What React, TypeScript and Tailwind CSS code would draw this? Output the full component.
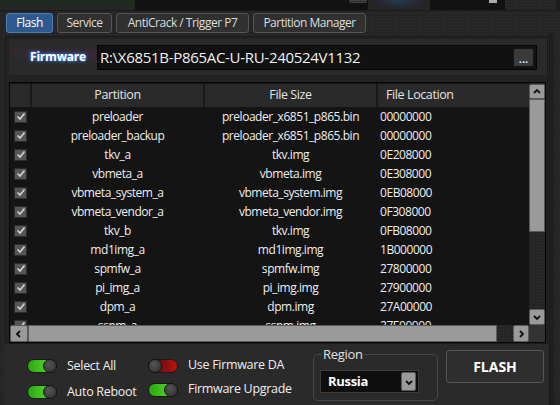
import React from 'react';

const rows: [string, string, string][] = [
    ['preloader', 'preloader_x6851_p865.bin', '00000000'],
    ['preloader_backup', 'preloader_x6851_p865.bin', '00000000'],
    ['tkv_a', 'tkv.img', '0E208000'],
    ['vbmeta_a', 'vbmeta.img', '0E308000'],
    ['vbmeta_system_a', 'vbmeta_system.img', '0EB08000'],
    ['vbmeta_vendor_a', 'vbmeta_vendor.img', '0F308000'],
    ['tkv_b', 'tkv.img', '0FB08000'],
    ['md1img_a', 'md1img.img', '1B000000'],
    ['spmfw_a', 'spmfw.img', '27800000'],
    ['pi_img_a', 'pi_img.img', '27900000'],
    ['dpm_a', 'dpm.img', '27A00000'],
    ['sspm_a', 'sspm.img', '27E00000'],
];

const texture = 'bg-[#252525] bg-[image:radial-gradient(#303030_1px,transparent_1px)] bg-[size:3px_3px]';

const Chevron = ({ dir }: { dir: 'up' | 'down' | 'left' | 'right' }) => {
    const pts = {
        up: '2,6 5,3 8,6',
        down: '2,4 5,7 8,4',
        left: '6,2 3,5 6,8',
        right: '4,2 7,5 4,8',
    }[dir];
    return (
        <svg width="10" height="10" viewBox="0 0 10 10">
            <polyline points={pts} fill="none" stroke="#111" strokeWidth="1.8" />
        </svg>
    );
};

const ScrollBtn = ({ dir, className = '' }: { dir: 'up' | 'down' | 'left' | 'right'; className?: string }) => (
    <div className={`flex shrink-0 items-center justify-center rounded-[2px] border border-[#5a5a5a] bg-[#9a9a9a] ${className}`}>
        <Chevron dir={dir} />
    </div>
);

const Check = () => (
    <div className="flex h-[12px] w-[13px] items-center justify-center border border-[#2c2c2c] bg-[#555]">
        <svg width="10" height="9" viewBox="0 0 10 9">
            <polyline points="1.5,4.5 4,7 8.5,1.5" fill="none" stroke="#d4d4d4" strokeWidth="1.6" />
        </svg>
    </div>
);

const Toggle = ({ on, red = false }: { on: boolean; red?: boolean }) => (
    <div
        className={`relative h-[14px] w-[30px] shrink-0 rounded-full border border-[#1a1a1a] ${
            on
                ? 'bg-[linear-gradient(90deg,#2aa60e,#5fe83a)]'
                : red
                ? 'bg-[linear-gradient(90deg,#3a1010,#c01010)]'
                : 'bg-[#333]'
        }`}
    >
        <div
            className={`absolute top-[-1px] h-[14px] w-[14px] rounded-full border border-[#151515] bg-[radial-gradient(circle_at_40%_35%,#555,#2e2e2e)] ${
                on ? 'right-[-1px]' : 'left-[-1px]'
            }`}
        />
    </div>
);

export default function App() {
    return (
        <div
            className={`flex h-[405px] w-[560px] flex-col overflow-hidden ${texture} text-[#eeeeee]`}
            style={{ fontFamily: '"Open Sans", "Noto Sans", sans-serif' }}
        >
            {/* strip of the window above */}
            <div className="flex h-[11px] shrink-0 border-b border-[#1a1a1a]">
                <div className="w-[135px] bg-[linear-gradient(180deg,#1e2a1e,#262626)]" />
                <div className="relative w-[233px] bg-[#121212]">
                    <div className="absolute right-[1px] top-0 h-[3px] w-[18px] rounded-b-[2px] border border-[#444] bg-[#2a2a2a]" />
                </div>
                <div className="w-[62px] bg-[radial-gradient(ellipse_at_50%_0%,#233a5a,#252525_60%)]" />
                <div className="relative w-[75px] bg-[#121212]">
                    <div className="absolute right-[8px] top-0 h-[3px] w-[8px] bg-[#aaa]" />
                </div>
                <div className="flex-1 border-r-[4px] border-[#1c1c1c]" />
            </div>

            {/* tabs */}
            <div className="ml-[6px] mt-[2px] flex h-[20px] shrink-0 gap-[4px] whitespace-nowrap text-[12px] tracking-[-0.5px]">
                <div className="flex w-[47px] items-center justify-center rounded-[3px] border border-[#4f7fb8] bg-[#2d5a8e] text-white">Flash</div>
                <div className="flex w-[55px] items-center justify-center rounded-[3px] border border-[#555] bg-[#303030] text-[#ddd]">Service</div>
                <div className="flex w-[133px] items-center justify-center rounded-[3px] border border-[#555] bg-[#303030] text-[#ddd]">AntiCrack / Trigger P7</div>
                <div className="flex w-[113px] items-center justify-center rounded-[3px] border border-[#555] bg-[#303030] text-[#ddd]">Partition Manager</div>
            </div>

            <div className="flex flex-1">
                {/* main panel */}
                <div className="ml-[5px] flex w-[543px] shrink-0 flex-col">
                    <div className="mt-[3px] flex h-[308px] shrink-0 flex-col border border-[#1b1b1b] bg-[#222] pl-[3px] pt-[2px]">
                        {/* firmware row */}
                        <div className="flex h-[36px] shrink-0 items-center bg-[#2a2a2a] bg-[radial-gradient(ellipse_at_15%_40%,#3a2838,#2a2a2a_25%)]">
                            <span className="ml-[21px] w-[67px] text-[12px] font-bold tracking-[-0.2px] text-white [text-shadow:0_0_4px_#3d8dff,0_0_2px_#3d8dff]">
                                Firmware
                            </span>
                            <div className="flex h-[25px] w-[440px] items-center justify-between border border-[#050505] bg-[#111] pl-[2px] pr-[2px]">
                                <span className="whitespace-nowrap text-[15px] tracking-[-0.3px] text-[#f0f0f0]">R:\X6851B-P865AC-U-RU-240524V1132</span>
                                <div className="flex h-[19px] w-[21px] items-end justify-center rounded-[2px] border border-[#151515] bg-[#3a3a3a] pb-[2px] text-[11px] font-bold leading-none text-[#cfe3ff]">
                                    ...
                                </div>
                            </div>
                        </div>

                        {/* table */}
                        <div className="mt-[7px] flex h-[261px] w-[537px] shrink-0 flex-col border border-[#080808] bg-[#141414]">
                            <div className="flex flex-1 overflow-hidden">
                                <div className="flex flex-1 flex-col overflow-hidden">
                                    <div className="mt-[1px] grid h-[23px] shrink-0 grid-cols-[20px_171px_171px_153px] gap-[2px] bg-[#1a1a1a] text-[12.5px] tracking-[-0.4px] text-[#e2e2e2]">
                                        <div className="bg-[#2a2a2a]" />
                                        <div className="flex items-center justify-center bg-[#2a2a2a]">Partition</div>
                                        <div className="flex items-center justify-center bg-[#2a2a2a]">File Size</div>
                                        <div className="flex items-center bg-[#2a2a2a] pl-[8px]">File Location</div>
                                    </div>
                                    {rows.map(([p, f, l]) => (
                                        <div key={p} className="grid h-[19px] shrink-0 grid-cols-[20px_171px_171px_153px] gap-[2px] whitespace-nowrap text-[12px] tracking-[-0.45px]">
                                            <div className="flex items-center justify-center pl-[1px]">
                                                <Check />
                                            </div>
                                            <div className="flex items-center justify-center">{p}</div>
                                            <div className="flex items-center justify-center">{f}</div>
                                            <div className="flex items-center pl-[2px]">{l}</div>
                                        </div>
                                    ))}
                                </div>
                                {/* vertical scrollbar */}
                                <div className={`flex w-[16px] shrink-0 flex-col ${texture}`}>
                                    <ScrollBtn dir="up" className="mt-[1px] h-[15px]" />
                                    <div className="h-[133px] border border-[#5a5a5a] bg-[#9a9a9a]" />
                                    <div className="flex-1" />
                                    <ScrollBtn dir="down" className="h-[16px]" />
                                </div>
                            </div>
                            {/* horizontal scrollbar */}
                            <div className={`flex h-[17px] shrink-0 ${texture}`}>
                                <ScrollBtn dir="left" className="w-[18px]" />
                                <div className="w-[469px] border border-[#5a5a5a] bg-[#9a9a9a]" />
                                <div className="flex-1" />
                                <ScrollBtn dir="right" className="w-[16px]" />
                                <div className="w-[16px] bg-[#333]" />
                            </div>
                        </div>
                    </div>

                    {/* bottom controls */}
                    <div className="flex flex-1 whitespace-nowrap bg-[#2a2a2a] pl-[22px] text-[12.5px] tracking-[-0.3px]">
                        <div className="mt-[15px] flex w-[121px] shrink-0 flex-col gap-[12px]">
                            <div className="flex h-[14px] items-center gap-[10px]">
                                <Toggle on />
                                <span>Select All</span>
                            </div>
                            <div className="flex h-[14px] items-center gap-[10px]">
                                <Toggle on />
                                <span>Auto Reboot</span>
                            </div>
                        </div>
                        <div className="mt-[14px] flex w-[165px] shrink-0 flex-col gap-[9px]">
                            <div className="flex h-[15px] items-center gap-[10px]">
                                <Toggle on={false} red />
                                <span>Use Firmware DA</span>
                            </div>
                            <div className="flex h-[15px] items-center gap-[10px]">
                                <Toggle on />
                                <span>Firmware Upgrade</span>
                            </div>
                        </div>
                        <fieldset className="mt-[3px] h-[54px] w-[125px] shrink-0 rounded-[5px] border border-[#484848] px-[6px]">
                            <legend className="ml-[2px] px-[1px] text-[13px] leading-[14px] text-[#e0e0e0]">Region</legend>
                            <div className="mt-[9px] flex h-[23px] w-[99px] items-center justify-between border border-[#3a3a3a] bg-[#0e0e0e] pl-[7px] pr-[2px]">
                                <span className="text-[13px] font-bold text-white">Russia</span>
                                <ScrollBtn dir="down" className="h-[19px] w-[15px]" />
                            </div>
                        </fieldset>
                        <div className="ml-[8px] mt-[6px] flex h-[33px] w-[98px] shrink-0 items-center justify-center rounded-[3px] border border-[#555] bg-[#2e2e2e] text-[14px] font-bold tracking-normal text-white">
                            FLASH
                        </div>
                    </div>
                </div>
                <div className="ml-[1px] w-[5px] border-l border-[#1a1a1a] bg-[#1f1f1f]" />
            </div>
        </div>
    );
}
